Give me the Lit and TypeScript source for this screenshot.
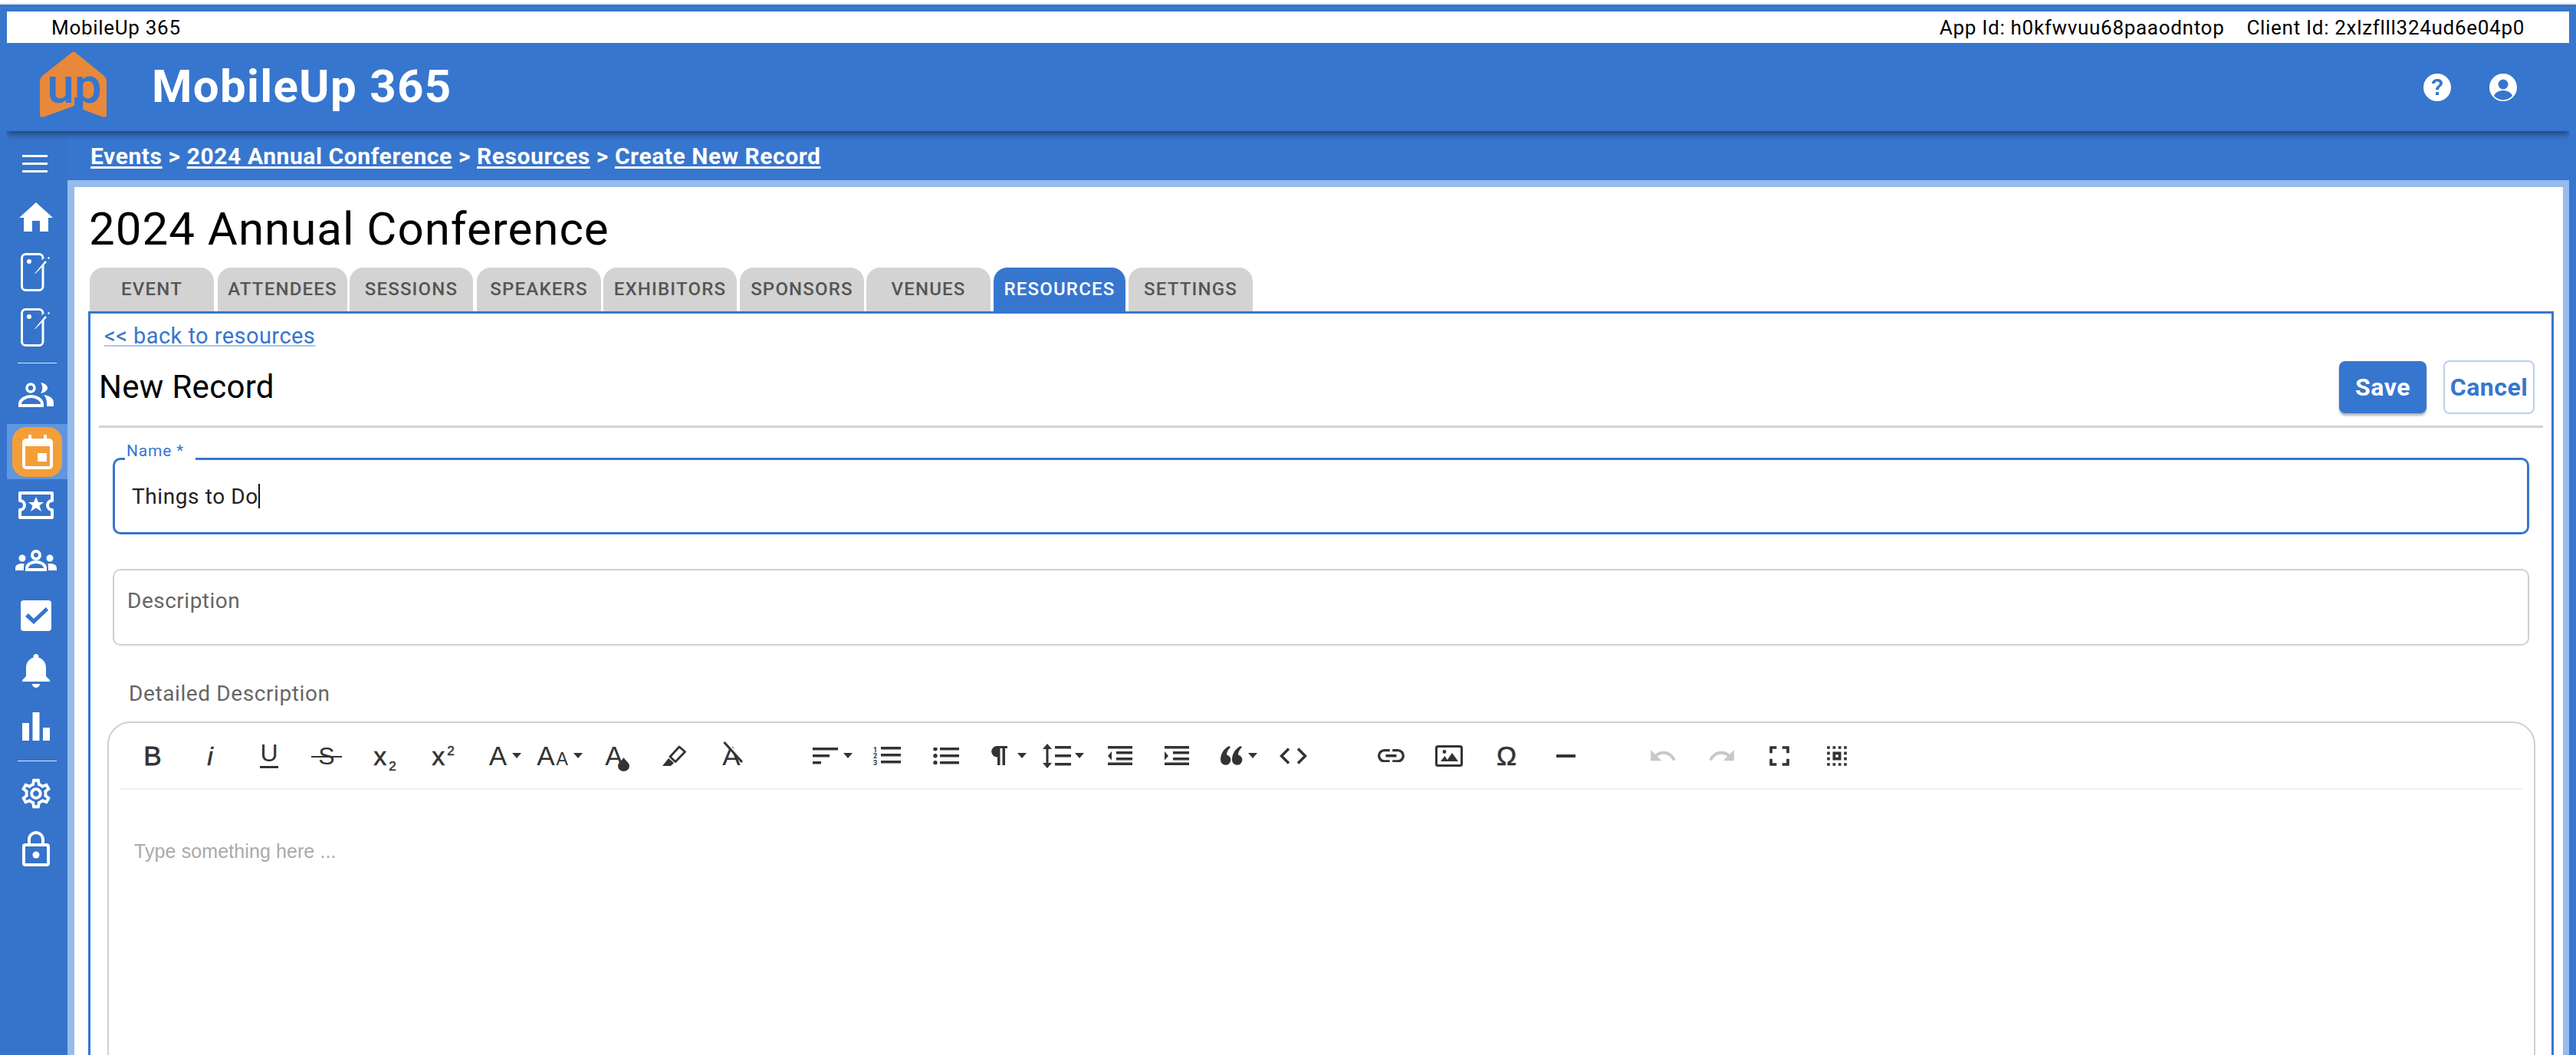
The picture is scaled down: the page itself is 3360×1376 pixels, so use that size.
import { LitElement, html, css, svg } from "lit";
import { customElement } from "lit/decorators.js";

const ic = (w: number, h: number, vb: string, body: unknown) =>
  html`<svg width=${w} height=${h} viewBox=${vb} fill="currentColor">${body}</svg>`;
const px = (w: number, h: number, body: unknown) => ic(w, h, `0 0 ${w} ${h}`, body);

const caret = html`<i class="caret"></i>`;
const m = (d: string, s = 46) => ic(s, s, "0 0 24 24", svg`<path d=${d}></path>`);

const phone = px(40, 50, svg`<rect x="1.500" y="1.500" width="27.500" height="47" rx="5" fill="none" stroke="currentColor" stroke-width="3"></rect><circle cx="11" cy="11" r="3"></circle><path d="M17 25 32 9" stroke="#3574ca" stroke-width="6"></path><path d="M18 27 32 10l2 2-15 15zM36 5l2 1-1 2-2-1z"></path>`);

const nav = {
  menu: px(33, 23, svg`<path d="M0 0h33v3H0zM0 10h33v3H0zM0 20h33v3H0z"></path>`),
  home: px(44, 38, svg`<path d="M22 0 44 20H38V38H27V24H17V38H6V20H0Z"></path>`),
  people: px(46, 32, svg`<circle cx="16" cy="7" r="5" fill="none" stroke="currentColor" stroke-width="3.500"></circle><path d="M29 0c6 1 9 4 9 7s-3 6-9 7c3-4 3-10 0-14z"></path><path d="M2 30v-2c0-6 8-10 14.500-10S31 22 31 28v2z" fill="none" stroke="currentColor" stroke-width="4"></path><path d="M33 16c7 1 13 4 13 10v5h-9v-4c0-4-1-8-4-11z"></path>`),
  calendar: px(40, 45, svg`<path d="M8 0h4v5h16V0h4v5h3a5 5 0 0 1 5 5v30a5 5 0 0 1-5 5H5a5 5 0 0 1-5-5V10a5 5 0 0 1 5-5h3zM4 15v25a1 1 0 0 0 1 1h30a1 1 0 0 0 1-1V15z" fill-rule="evenodd"></path><path d="M20 24h12v11H20z"></path>`),
  ticket: px(46, 36, svg`<path d="M2 2h42v10a6 6 0 0 0 0 12v10H2V24a6 6 0 0 0 0-12z" fill="none" stroke="currentColor" stroke-width="4" stroke-linejoin="round"></path><path d="m23 7 3 7h7l-5.500 4.500L30 26l-7-4.500-7 4.500 2.500-7.500L13 14h7z"></path>`),
  groups: px(54, 28, svg`<circle cx="27" cy="7" r="5" fill="none" stroke="currentColor" stroke-width="4"></circle><path d="M15 26v-2c0-5 6-8 12-8s12 3 12 8v2z" fill="none" stroke="currentColor" stroke-width="4"></path><circle cx="9" cy="11" r="4.500"></circle><circle cx="45" cy="11" r="4.500"></circle><path d="M0 27v-3c0-4 4-6 9-6l3 .5c-1 1.500-1 3.500-1 8.500zM54 27v-3c0-4-4-6-9-6l-3 .5c1 1.500 1 3.500 1 8.500z"></path>`),
  check: px(40, 40, svg`<rect width="40" height="40" rx="4"></rect><path d="m6 21 4-4 7 7L33 9l3 4-19 18z" fill="#3574ca"></path>`),
  bell: px(36, 44, svg`<path d="M18 0a3.500 3.500 0 0 1 3.500 3.500v1.200C28 6.500 31 12 31 18v11l5 5v2H0v-2l5-5V18C5 12 8 6.500 14.500 4.700V3.500A3.500 3.500 0 0 1 18 0zM13 39h10a5 5 0 0 1-10 0z"></path>`),
  bars: px(36, 37, svg`<path d="M0 14h9v23H0zM13.500 0h9v37h-9zM27 20h9v17h-9z"></path>`),
  gear: ic(46, 46, "0 0 24 24", svg`<path fill-rule="evenodd" d="M19.430 12.980c.04-.32.070-.64.070-.98s-.03-.66-.07-.98l2.110-1.650c.19-.15.240-.42.120-.64l-2-3.460c-.12-.22-.39-.3-.61-.22l-2.490 1c-.52-.4-1.080-.73-1.690-.98l-.38-2.650C14.460 2.180 14.250 2 14 2h-4c-.25 0-.46.180-.49.420l-.38 2.650c-.61.250-1.170.590-1.690.980l-2.490-1c-.23-.090-.49 0-.61.220l-2 3.460c-.13.220-.07.490.12.640l2.110 1.650c-.04.320-.07.650-.07.980s.03.660.07.980l-2.110 1.650c-.19.150-.24.420-.12.640l2 3.460c.12.220.39.300.61.220l2.490-1c.52.400 1.080.730 1.690.980l.38 2.650c.03.240.24.420.49.420h4c.25 0 .46-.18.490-.42l.38-2.650c.61-.25 1.170-.59 1.690-.98l2.490 1c.23.090.49 0 .61-.22l2-3.460c.12-.22.070-.49-.12-.64zM17.450 11.270c.04.310.05.520.05.730s-.02.430-.05.730l-.14 1.130.89.700 1.080.840-.7 1.210-1.270-.51-1.040-.42-.9.680c-.43.320-.84.560-1.250.730l-1.060.430-.16 1.130-.2 1.350h-1.400l-.19-1.350-.16-1.130-1.060-.43c-.43-.18-.83-.41-1.230-.71l-.91-.7-1.060.430-1.270.51-.7-1.210 1.080-.84.890-.7-.14-1.130c-.03-.31-.05-.54-.05-.74s.02-.43.05-.73l.14-1.130-.89-.7-1.080-.84.7-1.210 1.270.51 1.040.42.9-.68c.43-.32.840-.56 1.250-.73l1.060-.43.16-1.130.2-1.350h1.390l.19 1.350.16 1.130 1.060.43c.43.180.83.410 1.230.710l.91.700 1.060-.43 1.270-.51.7 1.210-1.070.850-.89.700zM12 8c-2.210 0-4 1.790-4 4s1.790 4 4 4 4-1.790 4-4-1.790-4-4-4zm0 6c-1.100 0-2-.9-2-2s.9-2 2-2 2 .9 2 2-.9 2-2 2z"></path>`),
  lock: px(36, 46, svg`<path fill-rule="evenodd" d="M18 0c6 0 11 5 11 11v5h3a4 4 0 0 1 4 4v22a4 4 0 0 1-4 4H4a4 4 0 0 1-4-4V20a4 4 0 0 1 4-4h3v-5C7 5 12 0 18 0zm0 4c-4 0-7 3-7 7v5h14v-5c0-4-3-7-7-7zM4 20v22h28V20z"></path><circle cx="18" cy="31" r="4.500"></circle>`),
};

const rows = (x: number, w = 0) => svg`<path d="M${x} 0h${w}v3.500h-${w}zM${x} 9h${w}v3.500h-${w}zM${x} 18h${w}v3.500h-${w}z"></path>`;

type Tool = { c: number; w?: number; t: unknown; off?: boolean };
const tools: Tool[] = [
  { c: 200, t: html`<span class="g b">B</span>` },
  { c: 275, t: html`<span class="g it">i</span>` },
  { c: 352, t: html`<span class="g u">U</span>` },
  { c: 427, t: html`<span class="g s">S</span>` },
  { c: 503, t: html`<span class="g x">x<sub>2</sub></span>` },
  { c: 579, t: html`<span class="g x">x<sup>2</sup></span>` },
  { c: 660, w: 60, t: html`<span class="g a">A</span>${caret}` },
  { c: 731, w: 60, t: html`<span class="g a">A<small>A</small></span>${caret}` },
  { c: 806, t: html`<span class="g a">A</span><svg class="drop" width="15" height="18" viewBox="0 0 15 18"><path d="M7.500 0c3 5 7.500 7 7.500 11a7.500 7 0 0 1-15 0C0 7 4.500 5 7.500 0z" fill="currentColor"></path></svg>` },
  { c: 880, t: px(31, 27, svg`<path d="M22 2 29.500 8.500 17 21.500 10 15Z" fill="none" stroke="currentColor" stroke-width="2.800" stroke-linejoin="round"></path><path d="M8 17 15 23 11 27H0L4 22Z"></path>`) },
  { c: 955, t: html`<span class="g a clr">A</span>` },
  { c: 1087, w: 54, t: html`${px(33, 22, svg`<path d="M0 0h33v3.500H0zM0 9h22v3.500H0zM0 18h11v3.500H0z"></path>`)}${caret}` },
  { c: 1158, w: 36, t: px(36, 24, svg`${rows(10, 26)}<text x="0" y="6.500" font-size="9" font-weight="700" font-family="Roboto, sans-serif">1</text><text x="0" y="15" font-size="9" font-weight="700" font-family="Roboto, sans-serif">2</text><text x="0" y="23.500" font-size="9" font-weight="700" font-family="Roboto, sans-serif">3</text>`) },
  { c: 1235, w: 34, t: px(34, 22, svg`${rows(9, 25)}<circle cx="3" cy="1.800" r="2.700"></circle><circle cx="3" cy="10.800" r="2.700"></circle><circle cx="3" cy="19.800" r="2.700"></circle>`) },
  { c: 1317, w: 48, t: html`${px(21, 25, svg`<path d="M7 0H21V3H18V25H14.500V3H11.500V25H8V14.500A7.200 7.200 0 0 1 7 0Z"></path>`)}<i class="caret wide"></i>` },
  { c: 1387, w: 58, t: html`${px(39, 32, svg`<path d="M8 0l6 7H9.500V25H14l-6 7-6-7H6.500V7H2zM18 3h21v3.500H18zM18 14h21v3.500H18zM18 25h21v3.500H18z"></path>`)}<i class="caret tight"></i>` },
  { c: 1462, w: 32, t: px(32, 25, svg`<path d="M0 0h32v3.500H0zM11 7h21v3.500H11zM11 15h21v3.500H11zM0 21.500h32V25H0zM5 7v11.500L0 13z"></path>`) },
  { c: 1536, w: 32, t: px(32, 25, svg`<path d="M0 0h32v3.500H0zM11 7h21v3.500H11zM11 15h21v3.500H11zM0 21.500h32V25H0zM0 7v11.500L5 13z"></path>`) },
  { c: 1617, w: 49, t: html`${px(29, 25, svg`<path d="M11 0 13 1.500C9.500 5 8 8 8 11.500A6.700 6.700 0 1 1 0 18.300C0 10 4 4 11 0ZM26 0 28 1.500C24.500 5 23 8 23 11.500A6.700 6.700 0 1 1 15 18.300C15 10 19 4 26 0Z"></path>`)}<i class="caret"></i>` },
  { c: 1688, w: 36, t: px(36, 22, svg`<path d="M12 1.500 2.500 11 12 20.500M24 1.500 33.500 11 24 20.500" fill="none" stroke="currentColor" stroke-width="3.500"></path>`) },
  { c: 1815, w: 36, t: ic(35, 17.500, "2 7 20 10", svg`<path d="M3.900 12c0-1.700 1.400-3.100 3.100-3.100h4V7H7a5 5 0 0 0 0 10h4v-1.900H7c-1.700 0-3.100-1.400-3.100-3.100zM8 13h8v-2H8zm9-6h-4v1.900h4c1.700 0 3.100 1.400 3.100 3.100s-1.400 3.100-3.100 3.100h-4V17h4a5 5 0 0 0 0-10z"></path>`) },
  { c: 1891, w: 36, t: px(36, 28, svg`<rect x="1.500" y="1.500" width="33" height="25" rx="2" fill="none" stroke="currentColor" stroke-width="3"></rect><circle cx="12" cy="8.500" r="2.400"></circle><path d="M7 21 12.500 14 17 21zM14.500 21 22 10 30 21z"></path>`) },
  { c: 1966, t: html`<span class="g omega">Ω</span>` },
  { c: 2043, w: 25, t: px(25, 4, svg`<rect width="25" height="4"></rect>`) },
  { c: 2170, off: true, t: m("M12.500 8c-2.650 0-5.050.99-6.900 2.600L2 7v9h9l-3.620-3.620c1.390-1.160 3.160-1.880 5.120-1.880 3.540 0 6.550 2.310 7.600 5.500l2.370-.78C21.080 11.030 17.150 8 12.500 8z", 38) },
  { c: 2247, off: true, t: m("M18.400 10.600C16.550 8.990 14.150 8 11.500 8c-4.650 0-8.580 3.030-9.960 7.220L3.900 16c1.050-3.190 4.050-5.500 7.600-5.500 1.950 0 3.730.72 5.120 1.880L13 16h9V7z", 38) },
  { c: 2322, t: m("M7 14H5v5h5v-2H7v-3zm-2-4h2V7h3V5H5v5zm12 7h-3v2h5v-5h-2v3zM14 5v2h3v3h2V5h-5z", 44) },
  { c: 2397, t: m("M5 5h2v2H5zM9 5h2v2H9zM13 5h2v2h-2zM17 5h2v2h-2zM5 9h2v2H5zM5 13h2v2H5zM5 17h2v2H5zM9 17h2v2H9zM13 17h2v2h-2zM17 17h2v2h-2zM17 9h2v2h-2zM17 13h2v2h-2zM9 9h6v6H9zM11 11v2h2v-2z", 44) },
];

const tabs: [string, number, number][] = [
  ["EVENT", 117, 279], ["ATTENDEES", 284, 453], ["SESSIONS", 456, 617], ["SPEAKERS", 622, 784],
  ["EXHIBITORS", 787, 961], ["SPONSORS", 965, 1127], ["VENUES", 1130, 1292], ["RESOURCES", 1296, 1468], ["SETTINGS", 1472, 1634],
];

@customElement("app-root")
export class AppRoot extends LitElement {
  static styles = css`
    :host { display: block; width: 3360px; height: 1376px; overflow: hidden; background: #fff; font-family: Roboto, sans-serif; color: #000; }
    .top { height: 4px; background: #fff; }
    .strip { height: 2px; background: #e4e4e4; }
    .shell { height: 1370px; background: #3776ce; display: flex; flex-direction: column; overflow: hidden; }
    .info { margin: 9px 9px 0; height: 41px; background: #fff; display: flex; align-items: center; font-size: 26px; letter-spacing: .7px; padding: 0 58px; flex: none; }
    .info .name { flex: 1; }
    .info .ids { display: flex; gap: 29px; }
    .head { margin: 0 9px; height: 115px; flex: none; display: flex; align-items: center; box-shadow: 0 4px 8px rgba(0,0,0,.42); clip-path: inset(0 0 -20px 0); background: #3776ce; position: relative; z-index: 1; color: #fff; }
    .logo { margin: 0 0 6px 43px; flex: none; }
    .title { font-size: 60px; font-weight: 700; margin-left: 59px; flex: 1; padding-bottom: 2px; letter-spacing: 1.3px; }
    .head .acts { display: flex; gap: 50px; margin-right: 68px; }
    .body { flex: 1; display: flex; min-height: 0; }
    .side { width: 88px; flex: none; background: #3574ca; color: #fff; display: flex; flex-direction: column; align-items: center; }
    .side .slot { height: 72px; width: 79px; margin-left: 9px; padding-right: 3px; box-sizing: border-box; display: flex; align-items: center; justify-content: center; flex: none; }
    .side .rule { width: 51px; height: 1px; background: #dfe9f7; flex: none; margin-left: 9px; }
    .side .active { background: #5f96e0; padding-right: 0; }
    .side .active span { width: 65px; height: 65px; border-radius: 18px; background: #f49e38; display: flex; align-items: center; justify-content: center; padding-right: 0; }
    .side .menu { height: 64px; margin-top: 10px; padding-right: 7px; }
    .side .mt2 { margin-top: 2px; }
    .side .mt10 { margin-top: 10px; }
    .side .mt5 { margin-top: 5px; }
    .side .mtn2 { margin-top: -2px; }
    .side .mt9 { margin-top: 9px; }
    .side .mt6 { margin-top: 6px; }
    .main { flex: 1; display: flex; flex-direction: column; min-width: 0; margin-right: 9px; }
    .crumbs { height: 64px; flex: none; display: flex; align-items: center; padding: 1px 0 0 30px; box-sizing: border-box; color: #fff; font-size: 30px; font-weight: 700; letter-spacing: .58px; white-space: pre; }
    .crumbs a { color: #fff; text-decoration: underline; text-underline-offset: 3px; }
    .card { flex: 1; border: solid #95bcec; border-width: 9px 8px 0 9px; background: #fff; padding: 0 12px 0 18px; display: flex; flex-direction: column; min-height: 0; }
    h1 { font-size: 60px; font-weight: 400; margin: 0; height: 105px; line-height: 110px; padding-left: 1px; flex: none; white-space: nowrap; letter-spacing: 1px; }
    .tabs { height: 57px; display: flex; flex: none; padding-left: 2px; }
    .tab { background: #d3d3d3; border-radius: 18px 18px 0 0; display: flex; align-items: center; justify-content: center; font-size: 24px; font-weight: 500; letter-spacing: 1.2px; color: #555; padding-bottom: 2px; box-sizing: border-box; flex: none; }
    .tab.on { background: #3776ce; color: #fff; }
    .panel { flex: 1; border: 3px solid #3776ce; border-bottom: 0; min-height: 0; padding: 0 11px; position: relative; display: flex; flex-direction: column; }
    .back { font-size: 29px; letter-spacing: .45px; color: #3776ce; text-decoration: underline; text-decoration-color: #a9c5ea; margin: 12px 0 0 7px; line-height: 35px; align-self: flex-start; flex: none; }
    .rec { display: flex; align-items: center; justify-content: space-between; height: 102px; box-sizing: border-box; padding: 0 11px 2px 0; border-bottom: 3px solid #d3d3d3; flex: none; }
    .rec h2 { font-size: 42px; font-weight: 400; margin: 0; letter-spacing: .3px; }
    .btns { display: flex; gap: 22px; align-items: center; }
    .btn { height: 68px; border-radius: 8px; display: flex; align-items: center; justify-content: center; font-size: 32px; font-weight: 700; box-sizing: border-box; letter-spacing: .5px; }
    .save { width: 114px; background: #3776ce; color: #fff; box-shadow: 0 3px 3px rgba(0,0,0,.3); }
    .cancel { width: 119px; height: 70px; color: #3776ce; background: #fff; border: 2px solid #b9cfee; }
    .field { position: relative; flex: none; margin: 0 18px 0 18px; box-sizing: border-box; border-radius: 10px; }
    .f1 { margin-top: 39px; height: 100px; border: 3px solid #3776ce; display: flex; align-items: center; padding-left: 22px; font-size: 28px; letter-spacing: .6px; color: #222; }
    .f1 .lab { position: absolute; left: 13px; top: -24px; padding-left: 2px; background: #fff; color: #3776ce; font-size: 21px; height: 24px; line-height: 24px; width: 92px; box-sizing: border-box; letter-spacing: .8px; }
    .f1 .cur { display: inline-block; width: 2px; height: 32px; background: #111; vertical-align: middle; }
    .f2 { margin-top: 45px; height: 100px; border: 2px solid #d0d0d0; padding: 23px 0 0 17px; font-size: 28px; color: #666; line-height: 34px; letter-spacing: .5px; }
    .lab3 { font-size: 28px; color: #666; margin: 46px 0 0 39px; line-height: 34px; flex: none; letter-spacing: .6px; }
    .ed { flex: 1; margin: 19px 10px -40px 11px; border: 2px solid #d0d0d0; border-radius: 30px; padding: 0 15px; min-height: 0; }
    .bar { height: 85px; border-bottom: 2px solid #efefef; display: flex; align-items: center; color: #333; }
    .t { height: 50px; display: flex; align-items: center; justify-content: center; flex: none; position: relative; }
    .t svg { flex: none; }
    .t.off { color: #c8c8c8; }
    .g { font-family: "Liberation Sans", sans-serif; line-height: 1; display: inline-block; }
    .g.b { font-size: 35px; -webkit-text-stroke: .8px currentColor; }
    .g.it { font-size: 34px; font-style: italic; -webkit-text-stroke: .5px currentColor; }
    .g.u { font-size: 32px; border-bottom: 3px solid currentColor; padding-bottom: 3px; line-height: .85; }
    .g.s { font-size: 32px; position: relative; }
    .g.s::after { content: ""; position: absolute; left: -9px; right: -9px; top: 16px; height: 2.500px; background: currentColor; }
    .g.x { font-size: 34px; -webkit-text-stroke: .5px currentColor; }
    .g.x sub, .g.x sup { font-size: 17px; margin-left: 3px; line-height: 0; }
    .g.a { font-size: 35px; }
    .g.a small { font-size: 23px; margin-left: 2px; }
    .g.clr { position: relative; }
    .g.clr::after { content: ""; position: absolute; left: 1px; top: 0; width: 3px; height: 35px; background: #333; transform: rotate(-42deg); transform-origin: top; box-shadow: 2px 0 0 #fff; }
    .g.omega { font-size: 35px; -webkit-text-stroke: .6px currentColor; }
    .caret { display: inline-block; width: 0; height: 0; border: 6.500px solid transparent; border-top: 7px solid #333; border-bottom: 0; margin-left: 7px; font-style: normal; flex: none; }
    .caret.wide { margin-left: 13px; }
    .caret.tight { margin-left: 5px; }
    .drop { margin: 22px 0 0 -7px; }
    .ph { font-family: "Liberation Sans", sans-serif; font-size: 25px; letter-spacing: .1px; color: #aaa; margin: 65px 0 0 18px; line-height: 30px; }
  `;

  private tb() {
    let right = 158;
    return tools.map((t) => {
      const w = t.w ?? 50;
      const left = t.c - w / 2;
      const ml = left - right;
      right = left + w;
      return html`<div class="t ${t.off ? "off" : ""}" style="width:${w}px;margin-left:${ml}px">${t.t}</div>`;
    });
  }

  render() {
    return html`
      <div class="top"></div><div class="strip"></div>
      <div class="shell">
        <div class="info"><span class="name">MobileUp 365</span><span class="ids"><span>App Id: h0kfwvuu68paaodntop</span><span>Client Id: 2xlzflll324ud6e04p0</span></span></div>
        <div class="head">
          <svg class="logo" width="87" height="87" viewBox="0 0 87 87">
            <path d="M41 2Q44-1 47 2L84 32Q87 35 87 38V82Q87 87 82 85.500L54 75V60H45V71L5 85.500Q0 87 0 82V38Q0 35 3 32Z" fill="#e8883a"></path>
            <text x="45" y="67" text-anchor="middle" font-family="Roboto, sans-serif" font-size="64" font-weight="500" fill="#3776ce">up</text>
          </svg>
          <div class="title">MobileUp 365</div>
          <div class="acts">
            ${px(36, 36, svg`<circle cx="18" cy="18" r="18"></circle><path d="M18 7c-4 0-7 2.500-7 6h4c0-1.500 1.300-2.700 3-2.700s3 1 3 2.400c0 3-5 3-5 8.300h4c0-4 5-4.500 5-8.500C25 9 22 7 18 7zM16 24h4v4h-4z" fill="#3776ce"></path>`)}
            ${px(36, 36, svg`<circle cx="18" cy="18" r="18"></circle><circle cx="18" cy="14" r="6.500" fill="#3776ce"></circle><path d="M6 29c2-5 7-7 12-7s10 2 12 7a16 16 0 0 1-24 0z" fill="#3776ce"></path>`)}
          </div>
        </div>
        <div class="body">
          <nav class="side">
            <div class="slot menu">${nav.menu}</div>
            <div class="slot mt2">${nav.home}</div>
            <div class="slot">${phone}</div>
            <div class="slot">${phone}</div>
            <div class="rule mt10"></div>
            <div class="slot mt5">${nav.people}</div>
            <div class="slot active mt2"><span>${nav.calendar}</span></div>
            <div class="slot mtn2">${nav.ticket}</div>
            <div class="slot">${nav.groups}</div>
            <div class="slot">${nav.check}</div>
            <div class="slot">${nav.bell}</div>
            <div class="slot">${nav.bars}</div>
            <div class="rule mt9"></div>
            <div class="slot mt6">${nav.gear}</div>
            <div class="slot">${nav.lock}</div>
          </nav>
          <div class="main">
            <div class="crumbs"><a>Events</a> &gt; <a>2024 Annual Conference</a> &gt; <a>Resources</a> &gt; <a>Create New Record</a></div>
            <div class="card">
              <h1>2024 Annual Conference</h1>
              <div class="tabs">
                ${tabs.map(([n, a, b], i) => html`<div class="tab ${n === "RESOURCES" ? "on" : ""}" style="width:${b - a}px;margin-left:${i ? a - tabs[i - 1][2] : 0}px">${n}</div>`)}
              </div>
              <div class="panel">
                <a class="back">&lt;&lt; back to resources</a>
                <div class="rec">
                  <h2>New Record</h2>
                  <div class="btns"><div class="btn save">Save</div><div class="btn cancel">Cancel</div></div>
                </div>
                <div class="field f1"><span class="lab">Name *</span><span>Things to Do</span><span class="cur"></span></div>
                <div class="field f2">Description</div>
                <div class="lab3">Detailed Description</div>
                <div class="ed">
                  <div class="bar">${this.tb()}</div>
                  <div class="ph">Type something here ...</div>
                </div>
              </div>
            </div>
          </div>
        </div>
      </div>
    `;
  }
}
